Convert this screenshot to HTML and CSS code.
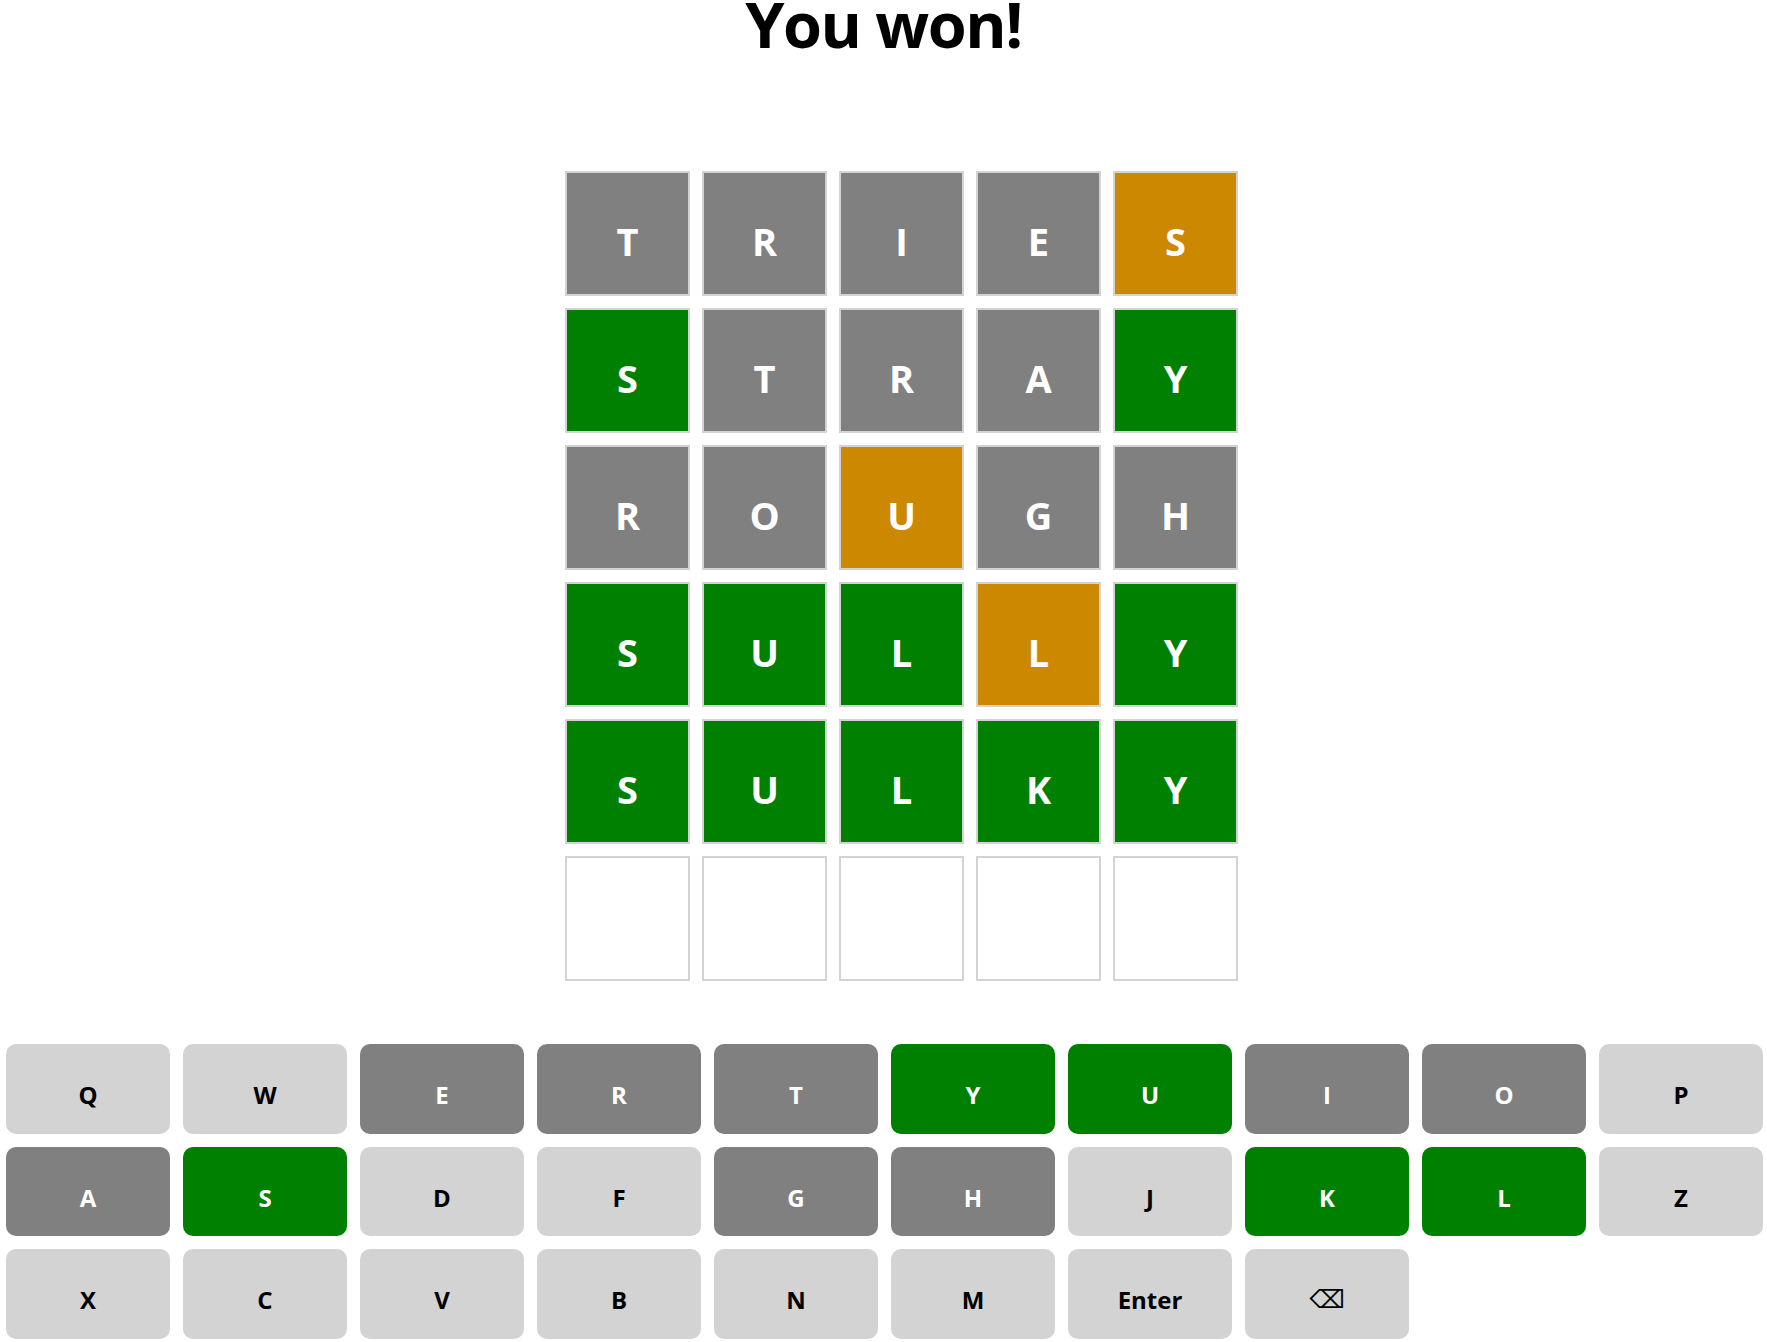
FILE: index.html
```html
<!DOCTYPE html>
<html lang="en">
<head>
<meta charset="utf-8">
<title>Wordle</title>
<link rel="stylesheet" href="styles.css">
</head>
<body>
<h1 class="title">You won!</h1>
<div class="board">
  <div class="tile absent">T</div><div class="tile absent">R</div><div class="tile absent">I</div><div class="tile absent">E</div><div class="tile present">S</div>
  <div class="tile correct">S</div><div class="tile absent">T</div><div class="tile absent">R</div><div class="tile absent">A</div><div class="tile correct">Y</div>
  <div class="tile absent">R</div><div class="tile absent">O</div><div class="tile present">U</div><div class="tile absent">G</div><div class="tile absent">H</div>
  <div class="tile correct">S</div><div class="tile correct">U</div><div class="tile correct">L</div><div class="tile present">L</div><div class="tile correct">Y</div>
  <div class="tile correct">S</div><div class="tile correct">U</div><div class="tile correct">L</div><div class="tile correct">K</div><div class="tile correct">Y</div>
  <div class="tile"></div><div class="tile"></div><div class="tile"></div><div class="tile"></div><div class="tile"></div>
</div>
<div class="keyboard">
  <button class="key">Q</button><button class="key">W</button><button class="key absent">E</button><button class="key absent">R</button><button class="key absent">T</button><button class="key correct">Y</button><button class="key correct">U</button><button class="key absent">I</button><button class="key absent">O</button><button class="key">P</button>
  <button class="key absent">A</button><button class="key correct">S</button><button class="key">D</button><button class="key">F</button><button class="key absent">G</button><button class="key absent">H</button><button class="key">J</button><button class="key correct">K</button><button class="key correct">L</button><button class="key">Z</button>
  <button class="key">X</button><button class="key">C</button><button class="key">V</button><button class="key">B</button><button class="key">N</button><button class="key">M</button><button class="key">Enter</button><button class="key back">⌫</button>
</div>
</body>
</html>
```
FILE: styles.css
```css
html, body {
  margin: 0;
  padding: 0;
  background: #ffffff;
  font-family: "Open Sans", "Noto Sans", "Liberation Sans", sans-serif;
}

.title {
  margin: 0;
  height: 47px;
  line-height: 47px;
  font-size: 63px;
  font-weight: 700;
  text-align: center;
  color: #000;
  letter-spacing: -1.5px;
}

.board {
  margin-top: 124px;
  padding-left: 36px;
  display: grid;
  grid-template-columns: repeat(5, 125px);
  grid-auto-rows: 125px;
  gap: 12px;
  justify-content: center;
}

.tile {
  box-sizing: border-box;
  border: 2px solid #d3d3d3;
  background: #ffffff;
  color: #ffffff;
  font-size: 38px;
  font-weight: 700;
  display: flex;
  align-items: center;
  justify-content: center;
  padding-top: 14px;
}

.absent { background: #808080; color: #ffffff; }
.correct { background: #008000; color: #ffffff; }
.present { background: #cc8800; color: #ffffff; }

.keyboard {
  margin: 63px 0 0 6px;
  width: 1757px;
  display: grid;
  grid-template-columns: repeat(10, 1fr);
  grid-auto-rows: 89.5px;
  column-gap: 13px;
  row-gap: 13px;
}

.key {
  border: none;
  border-radius: 10px;
  background: #d3d3d3;
  color: #000;
  font-family: "Open Sans", "Noto Sans", "Liberation Sans", sans-serif;
  font-size: 24px;
  font-weight: 700;
  padding: 12px 0 0;
  margin: 0;
  display: flex;
  align-items: center;
  justify-content: center;
}

.key.absent { background: #808080; color: #fff; }
.key.correct { background: #008000; color: #fff; }

.key.back {
  font-family: "DejaVu Sans", sans-serif;
  font-weight: 400;
  font-size: 25px;
}
```
